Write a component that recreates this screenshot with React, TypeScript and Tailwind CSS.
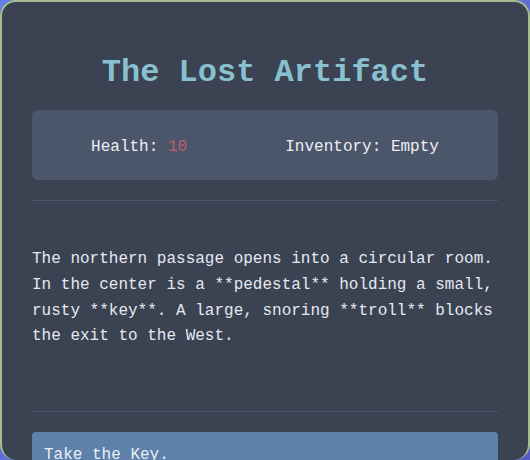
const choices = ['Take the Key.', 'Go West.', 'Go back South.'];

export default function App() {
  return (
    <div className="h-screen overflow-hidden bg-gradient-to-br from-[#677ee8] to-[#5a5cc6]">
      <div
        className="h-screen overflow-hidden rounded-2xl border-2 border-b-0 border-[#a3be8c] bg-[#3b4252] px-[30px] pt-[30px] text-[#eceff4]"
        style={{ fontFamily: '"Courier New", "Liberation Mono", monospace' }}
      >
        <h1 className="mt-[23px] mb-[19px] text-center text-[32px] leading-[36px] font-bold text-[#88c0d0]">
          The Lost Artifact
        </h1>

        {/* Stats */}
        <div className="flex h-[70px] items-center justify-around rounded-md bg-[#4c566a] px-[10px] pt-[4px] text-base">
          <span>
            Health: <span className="text-[#bf616a]">10</span>
          </span>
          <span>Inventory: Empty</span>
        </div>

        <hr className="mt-[20px] border-0 border-t border-[#4c566a]" />

        {/* Scene */}
        <p className="pt-[46px] pb-[61px] text-base leading-[25.8px] text-[#e5e9f0]">
          The northern passage opens into a circular room. In the center is a **pedestal** holding a small,
          rusty **key**. A large, snoring **troll** blocks the exit to the West.
        </p>

        <hr className="border-0 border-t border-[#4c566a]" />

        <div className="mt-[20px] flex flex-col gap-[10px]">
          {choices.map((c) => (
            <button
              key={c}
              className="w-full rounded-sm bg-[#5e81ac] px-3 pt-[14px] pb-[10px] text-left text-base leading-[18px] text-[#eceff4]"
            >
              {c}
            </button>
          ))}
        </div>
      </div>
    </div>
  );
}
